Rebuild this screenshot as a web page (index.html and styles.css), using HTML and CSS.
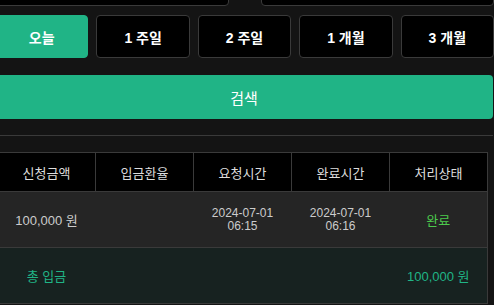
FILE: index.html
```html
<!DOCTYPE html>
<html lang="ko">
<head>
    <meta charset="UTF-8">
    <meta name="viewport" content="width=device-width, initial-scale=1.0">
    <title>입금내역</title>
    <link rel="stylesheet" href="styles.css">
</head>

<body>
    <div class="wrap">
        <!-- date range -->
        <div class="date-row">
            <input class="date-input" type="text">
            <span class="spacer"></span>
            <input class="date-input" type="text">
        </div>

        <div class="period-row">
            <button class="period active">오늘</button>
            <button class="period">1 주일</button>
            <button class="period">2 주일</button>
            <button class="period">1 개월</button>
            <button class="period">3 개월</button>
        </div>

        <button class="search-btn">검색</button>

        <hr class="divider">

        <table class="history">
            <thead>
                <tr>
                    <th>신청금액</th>
                    <th>입금환율</th>
                    <th>요청시간</th>
                    <th>완료시간</th>
                    <th>처리상태</th>
                </tr>
            </thead>
            <tbody>
                <tr class="data-row">
                    <td>100,000 원</td>
                    <td></td>
                    <td class="time">2024-07-01<br>06:15</td>
                    <td class="time">2024-07-01<br>06:16</td>
                    <td class="done">완료</td>
                </tr>
                <tr class="total-row">
                    <td>총 입금</td>
                    <td></td>
                    <td></td>
                    <td></td>
                    <td>100,000 원</td>
                </tr>
            </tbody>
        </table>
    </div>
</body>

</html>
```

FILE: styles.css
```css
body {
    background-color: #141414;
    color: #ddd;
    font-family: "Liberation Sans", "Noto Sans CJK KR", sans-serif;
    margin: 0;
    overflow: hidden;
}

.wrap {
    margin-left: -5px;
    width: 499px;
}

/* date inputs */
.date-row {
    display: flex;
    margin-top: -34px;
}

.date-input {
    flex: 1;
    min-width: 0;
    height: 40px;
    box-sizing: border-box;
    background: #000;
    border: 1px solid #3a3a3a;
    border-radius: 4px;
    color: #ddd;
}

.spacer {
    width: 32px;
}

/* period buttons */
.period-row {
    display: grid;
    grid-template-columns: repeat(5, 1fr);
    gap: 8px;
    margin-top: 9px;
}

.period {
    height: 43px;
    background: #000;
    border: 1px solid #3a3a3a;
    border-radius: 4px;
    color: #fff;
    font-family: "Liberation Sans", "Noto Sans CJK KR", sans-serif;
    font-size: 14px;
    font-weight: bold;
}

.period.active {
    background: #20b486;
    border-color: #20b486;
}

.search-btn {
    display: block;
    width: 498px;
    height: 44px;
    margin-top: 17px;
    background: #20b486;
    border: none;
    border-radius: 4px;
    color: #fff;
    font-family: "Liberation Sans", "Noto Sans CJK KR", sans-serif;
    font-size: 15px;
}

.divider {
    width: 498px;
    margin: 16px 0 0 0;
    border: none;
    border-top: 1px solid #3a3a3a;
}

/* table */
.history {
    margin: 16px 0 0 2px;
    width: 491px;
    border-collapse: collapse;
    table-layout: fixed;
    font-size: 13px;
    text-align: center;
}

.history th {
    height: 38px;
    background: #000;
    border: 1px solid #3a3a3a;
    font-weight: normal;
    color: #ddd;
    padding: 0;
}

.history td {
    padding: 0;
    border-top: 1px solid #3a3a3a;
    border-bottom: 1px solid #3a3a3a;
}

.history td:last-child {
    border-right: 1px solid #3a3a3a;
}

.data-row td {
    height: 55px;
    background: #252525;
    color: #ccc;
}

.data-row .time {
    font-size: 12px;
    line-height: 13px;
}

.data-row .done {
    color: #4cc94c;
}

.total-row td {
    height: 55px;
    background: #172220;
    color: #20b486;
}
```
